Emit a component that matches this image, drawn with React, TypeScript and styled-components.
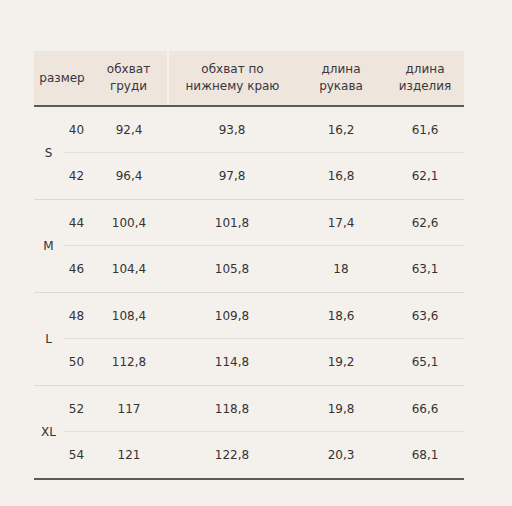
import React from "react";
import styled, { createGlobalStyle } from "styled-components";

const GlobalStyle = createGlobalStyle`
  html, body {
    margin: 0;
    padding: 0;
    background: #f4f1ec;
  }
`;

const Page = styled.div`
  padding: 51px 0 0 34px;
  font-family: "DejaVu Sans", Verdana, sans-serif;
  font-size: 12px;
  color: #333;
`;

const Table = styled.table`
  width: 430px;
  border-collapse: collapse;
  table-layout: fixed;
  border-bottom: 2px solid #5a5a5a;
`;

const Col = styled.col<{ $w: number }>`
  width: ${(p) => p.$w}px;
`;

const HeadCell = styled.th<{ $divider?: boolean }>`
  height: 54px;
  padding: 0;
  background: #eee6dc;
  font-weight: normal;
  line-height: 17px;
  text-align: center;
  color: #3a3540;
  border-bottom: 2px solid #5a5a5a;
  border-right: ${(p) => (p.$divider ? "2px solid #f4efe8" : "none")};
`;

const SizeCell = styled.td`
  padding: 0;
  text-align: center;
  border-bottom: 1px solid #dcd8d1;
`;

const Cell = styled.td<{ $last?: boolean }>`
  height: ${(p) => (p.$last ? 46 : 45)}px;
  padding: 0;
  text-align: center;
  border-bottom: 1px solid ${(p) => (p.$last ? "#dcd8d1" : "#e2ded8")};
`;

const columns = [29, 27, 78, 128, 90, 78];

const groups = [
  {
    size: "S",
    rows: [
      ["40", "92,4", "93,8", "16,2", "61,6"],
      ["42", "96,4", "97,8", "16,8", "62,1"],
    ],
  },
  {
    size: "M",
    rows: [
      ["44", "100,4", "101,8", "17,4", "62,6"],
      ["46", "104,4", "105,8", "18", "63,1"],
    ],
  },
  {
    size: "L",
    rows: [
      ["48", "108,4", "109,8", "18,6", "63,6"],
      ["50", "112,8", "114,8", "19,2", "65,1"],
    ],
  },
  {
    size: "XL",
    rows: [
      ["52", "117", "118,8", "19,8", "66,6"],
      ["54", "121", "122,8", "20,3", "68,1"],
    ],
  },
];

const App = () => {
  return (
    <Page>
      <GlobalStyle />
      <Table>
        <colgroup>
          {columns.map((w, i) => (
            <Col key={i} $w={w} />
          ))}
        </colgroup>
        <thead>
          <tr>
            <HeadCell colSpan={2}>размер</HeadCell>
            <HeadCell $divider>
              обхват
              <br />
              груди
            </HeadCell>
            <HeadCell>
              обхват по
              <br />
              нижнему краю
            </HeadCell>
            <HeadCell>
              длина
              <br />
              рукава
            </HeadCell>
            <HeadCell>
              длина
              <br />
              изделия
            </HeadCell>
          </tr>
        </thead>
        <tbody>
          {groups.map((g, gi) =>
            g.rows.map((row, ri) => (
              <tr key={`${gi}-${ri}`}>
                {ri === 0 && <SizeCell rowSpan={2}>{g.size}</SizeCell>}
                {row.map((v, ci) => (
                  <Cell key={ci} $last={ri === 1}>
                    {v}
                  </Cell>
                ))}
              </tr>
            ))
          )}
        </tbody>
      </Table>
    </Page>
  );
};

export default App;
